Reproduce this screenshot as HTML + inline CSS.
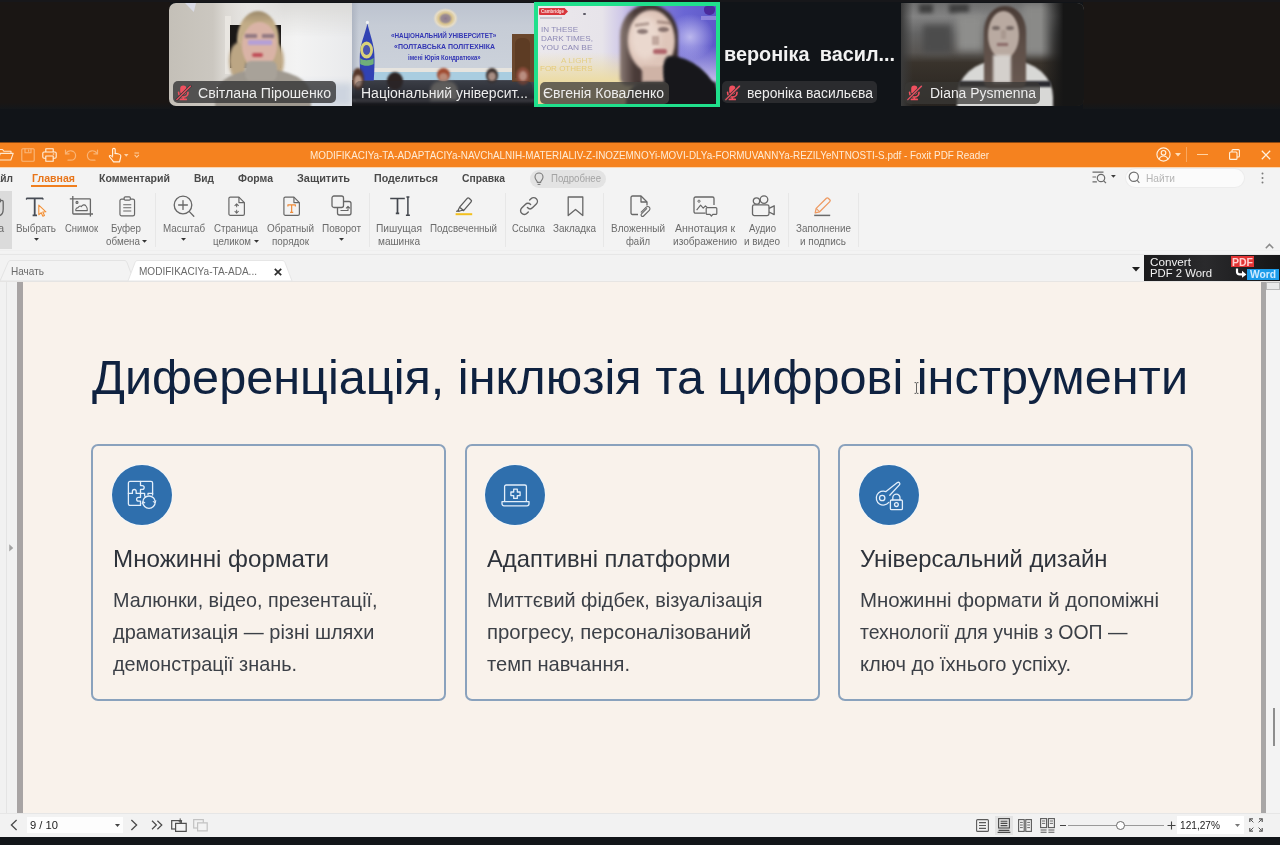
<!DOCTYPE html>
<html lang="uk"><head>
<meta charset="utf-8">
<title>Foxit PDF Reader</title>
<style>
*{box-sizing:border-box;margin:0;padding:0}
html,body{width:1280px;height:845px;overflow:hidden;background:#121519;font-family:"Liberation Sans","DejaVu Sans",sans-serif}
.abs,.t{position:absolute}
.t{white-space:nowrap;line-height:1;display:inline-block;transform-origin:0 50%}
#stage{position:relative;width:1280px;height:845px;overflow:hidden;background:#121519}
/* ---------- video strip ---------- */
#strip{left:0;top:0;width:1280px;height:142px;background:#111418}
.edge{top:0;height:109px;background:linear-gradient(180deg,#1a1614 0,#1a1614 94%,#14171a 100%)}
.tile{top:3px;height:103px;overflow:hidden;background:#222}
.pill{height:22px;top:81px;border-radius:5px;background:rgba(52,52,54,.80)}
.pt{color:#ededed;font-size:14px;top:85.900px}
.mic{position:absolute;width:17px;height:17px;top:83.600px}
.blob{position:absolute;border-radius:50%}
/* ---------- foxit ---------- */
#title{left:0;top:142px;width:1280px;height:25px;background:#f5821f}
#menu{left:0;top:167px;width:1280px;height:86px;background:#f3f3f3}
#tabs{left:0;top:253px;width:1280px;height:29px;background:#f2f2f2}
#doc{left:0;top:282px;width:1280px;height:531px;background:#f9f2eb}
#status{left:0;top:813px;width:1280px;height:24px;background:#f2f2f2}
#bottom{left:0;top:837px;width:1280px;height:8px;background:#121519}
.mt{font-size:11px;font-weight:bold;color:#4a4a4a;top:173px}
.rl{font-size:11px;color:#6b6b6b}
.sep{position:absolute;top:193px;width:1px;height:54px;background:#e7e7e7}
.ico{position:absolute;overflow:visible}
/* ---------- pdf page ---------- */
.h1{font-size:47.500px;color:#0f2240;top:353.800px;left:92px}
.card{position:absolute;top:444px;width:355px;height:257px;border:2px solid #8aa2bd;border-radius:7px;background:#f9f2eb}
.circ{position:absolute;top:465px;width:60px;height:60px;border-radius:50%;background:#2f6fad;box-shadow:0 0 0 1px rgba(240,246,252,.7)}
.ct{font-size:24px;color:#2e333b;top:547.200px}
.cb{font-size:20.800px;color:#3c4047}
</style>
</head>
<body>
<div id="stage">

<div id="strip" class="abs">
 <div class="abs edge" style="left:0;width:170px"></div>
 <div class="abs edge" style="left:1083px;width:197px"></div>
 <div class="abs" style="left:0;top:0;width:1280px;height:2px;background:#17171a"></div>

 <!-- tile 1 -->
 <div class="abs tile" style="left:169px;width:183px;border-radius:7px 0 0 7px;background:linear-gradient(90deg,#c4c0b8 0,#cbc7c0 24%,#dcd9d4 31%,#e9e8e6 44%,#f3f3f3 70%,#e9eaec 100%)">
  <div class="abs" style="left:70px;top:0;width:113px;height:34px;background:linear-gradient(180deg,rgba(214,213,210,.8),rgba(236,236,236,0));-webkit-mask-image:linear-gradient(90deg,transparent,#000 40%);mask-image:linear-gradient(90deg,transparent,#000 40%)"></div>
  <div class="abs" style="left:118px;top:80px;width:65px;height:23px;background:#cdd4df;filter:blur(3px)"></div>
  <div class="abs" style="left:16px;top:0;width:11px;height:9px;background:#d9dbe6;clip-path:polygon(0 0,100% 0,80% 100%)"></div>
  <div class="abs" style="left:56px;top:13px;width:6px;height:58px;background:#e9e6e1"></div>
  <div class="abs" style="left:61px;top:22px;width:51px;height:43px;background:#1a1817"></div>
  <div class="blob" style="left:68px;top:8px;width:42px;height:58px;background:linear-gradient(180deg,#9c8a6c 0,#c3ad88 22%,#c9b492 100%);filter:blur(1.2px)"></div>
  <div class="blob" style="left:60px;top:40px;width:18px;height:36px;background:#bca684;filter:blur(1.6px)"></div>
  <div class="blob" style="left:98px;top:40px;width:17px;height:36px;background:#bfa987;filter:blur(1.6px)"></div>
  <div class="blob" style="left:73px;top:19px;width:35px;height:47px;background:#d9b3a6;filter:blur(1.2px)"></div>
  <div class="abs" style="left:76px;top:31px;width:12px;height:4px;background:#5a4a66;opacity:.55;filter:blur(1px)"></div>
  <div class="abs" style="left:93px;top:31px;width:12px;height:4px;background:#5a4a66;opacity:.55;filter:blur(1px)"></div>
  <div class="abs" style="left:79px;top:37px;width:24px;height:5px;background:#a99ae6;opacity:.75;filter:blur(1px)"></div>
  <div class="abs" style="left:83px;top:49.500px;width:11px;height:4px;background:#c04e58;border-radius:2px;filter:blur(.8px)"></div>
  <div class="abs" style="left:46px;top:66px;width:96px;height:50px;background:#9f9990;border-radius:48px 48px 0 0/26px 26px 0 0;filter:blur(1.3px)"></div>
  <div class="abs" style="left:76px;top:58px;width:32px;height:20px;background:#a8a299;border-radius:6px;filter:blur(1.1px)"></div>
 </div>
 <div class="abs pill" style="left:173px;width:163px"></div>
 <svg class="mic" style="left:175px" viewBox="0 0 17 17"><rect x="5.200" y="1.600" width="6.200" height="9" rx="3.100" fill="#f0505f"></rect>
  <path d="M3.600 8.400a4.700 4.700 0 0 0 9.400 0M8.300 13v2.200M5.400 15.400h5.800" fill="none" stroke="#f0505f" stroke-width="1.700" stroke-linecap="round"></path>
  <path d="M1.800 15.600L15.400 2.200" stroke="#3a3a3c" stroke-width="2.800" stroke-linecap="round"></path>
  <path d="M1.800 15.600L15.400 2.200" stroke="#f0505f" stroke-width="1.300" stroke-linecap="round"></path></svg>
 <span class="t pt" style="left: 198px; display: inline-block; white-space: nowrap; transform-origin: 0px 50%; transform: scaleX(1.01);">Світлана Пірошенко</span>

 <!-- tile 2 -->
 <div class="abs tile" style="left:352px;width:182px;background:linear-gradient(180deg,#bcc3cf 0,#c6ccd6 22%,#cbd1da 60%,#c9cfd8 100%)">
  <div class="abs" style="left:0;top:0;width:7px;height:80px;background:linear-gradient(90deg,#aeb5c2,rgba(190,197,208,0))"></div>
  <div class="abs" style="left:22px;top:65px;width:140px;height:4px;background:#e6e4df"></div>
  <div class="abs" style="left:0;top:69px;width:182px;height:10px;background:#a9cde0"></div>
  <div class="abs" style="left:0;top:77px;width:182px;height:26px;background:linear-gradient(180deg,#474c56 0,#30333b 45%,#1d1e24 80%,#141518 100%)"></div>
  <div class="abs" style="left:159.500px;top:31px;width:22.500px;height:48px;background:#6a472d"></div>
  <div class="abs" style="left:163px;top:35px;width:15px;height:40px;background:#5d3c24;border-radius:6px 6px 0 0"></div>
  <svg class="ico" style="left:6px;top:17px" width="18" height="62" viewBox="0 0 18 62"><path d="M9.400 3.500C7.500 12 3.400 22 2.200 30c-1 8 0 22 0 30.500h13.600c.6-9 1.200-22 .2-30.500C15 22 11.400 12 9.400 3.500z" fill="#3142b4"></path><ellipse cx="8.600" cy="30" rx="6.400" ry="8.600" fill="#d9d27a"></ellipse><ellipse cx="8.600" cy="30" rx="3.600" ry="5" fill="#4a55b0"></ellipse><path d="M2.200 38c3 3 9.600 3 13.400 0v6c-4 2.400-10 2.400-13.400 0z" fill="#6fae7a"></path><circle cx="9.400" cy="2.400" r="1.600" fill="#eef0f2"></circle></svg>
  <div class="blob" style="left:81px;top:4.500px;width:25px;height:21px;background:radial-gradient(closest-side,#8d7a8e 0,#9c8d92 35%,#d9c48e 55%,#e6dcc6 80%,rgba(214,214,214,0) 100%)"></div>
  <span class="t" style="left: 39px; top: 29.4px; font-size: 8px; font-weight: bold; color: rgb(51, 54, 180); display: inline-block; white-space: nowrap; transform-origin: 0px 50%; transform: scaleX(0.791);">«НАЦІОНАЛЬНИЙ УНІВЕРСИТЕТ»</span>
  <span class="t" style="left: 42px; top: 40.3px; font-size: 8px; font-weight: bold; color: rgb(51, 54, 180); display: inline-block; white-space: nowrap; transform-origin: 0px 50%; transform: scaleX(0.8728);">«ПОЛТАВСЬКА ПОЛІТЕХНІКА</span>
  <span class="t" style="left: 55.7px; top: 50.6px; font-size: 7px; font-weight: bold; color: rgb(51, 54, 180); display: inline-block; white-space: nowrap; transform-origin: 0px 50%; transform: scaleX(0.8573);">імені Юрія Кондратюка»</span>
  <div class="blob" style="left:0;top:65px;width:12px;height:22px;background:#553628;filter:blur(1px)"></div>
  <div class="blob" style="left:2px;top:72px;width:8px;height:12px;background:#b89a8a;filter:blur(1px)"></div>
  <div class="blob" style="left:35px;top:69px;width:16px;height:18px;background:#2c2322;filter:blur(1px)"></div>
  <div class="blob" style="left:84.500px;top:64.500px;width:13px;height:13px;background:#a04a30;filter:blur(.9px)"></div>
  <div class="blob" style="left:86.500px;top:70px;width:9px;height:9px;background:#b98a78;filter:blur(.9px)"></div>
  <div class="abs" style="left:78px;top:78px;width:28px;height:20px;background:#7a7873;border-radius:10px 10px 0 0;filter:blur(1.4px)"></div>
  <div class="blob" style="left:134px;top:65px;width:12px;height:15px;background:#3a2f2c;filter:blur(1px)"></div>
  <div class="blob" style="left:136px;top:69px;width:8px;height:9px;background:#a88e84;filter:blur(1px)"></div>
  <div class="blob" style="left:164px;top:63.500px;width:14px;height:18px;background:#8a4c3a;filter:blur(1px)"></div>
  <div class="blob" style="left:167px;top:67.500px;width:8px;height:10px;background:#b98e80;filter:blur(1px)"></div>
  <div class="abs" style="left:0;top:96px;width:182px;height:3px;background:#5c5d62;opacity:.55;filter:blur(1px)"></div>
 </div>
 <div class="abs pill" style="left:355px;width:177px;background:rgba(40,41,46,.35)"></div>
 <span class="t pt" style="left: 360.5px; display: inline-block; white-space: nowrap; transform-origin: 0px 50%; transform: scaleX(0.9993);">Національний університ...</span>

 <!-- tile 3 (active speaker) -->
 <div class="abs" style="left:534px;top:2px;width:185.500px;height:105px;background:#20e08c"></div>
 <div class="abs tile" style="left:537.500px;top:5.500px;width:178.500px;height:98px;background:linear-gradient(90deg,#ebe8ec 0,#e7e4ea 36%,#cfc8e8 47%,#8d84d8 62%,#6a66d4 82%,#5f59c8 100%)">
  <div class="abs" style="left:0;top:46px;width:96px;height:52px;background:linear-gradient(180deg,rgba(236,222,170,0),#ecdca6 55%,#e6d294)"></div>
  <div class="abs" style="left:96px;top:40px;width:83px;height:58px;background:linear-gradient(180deg,rgba(214,208,240,0),#d2ccee 70%,#e2def4)"></div>
  <div class="blob" style="left:128px;top:8px;width:48px;height:46px;background:radial-gradient(closest-side,rgba(196,192,240,.9),rgba(150,144,226,0))"></div>
  <div class="abs" style="left:1px;top:2.500px;width:26px;height:7px;background:#d8363c;border-radius:1px"></div>
  <div class="abs" style="left:24.500px;top:3.500px;width:5px;height:5px;background:#d8363c;transform:rotate(45deg)"></div>
  <span class="t" style="left: 3px; top: 3.5px; font-size: 5px; font-weight: bold; color: rgb(248, 220, 220); display: inline-block; white-space: nowrap; transform-origin: 0px 50%; transform: scaleX(0.8804);">Cambridge</span>
  <div class="abs" style="left:2px;top:11.500px;width:22px;height:1.500px;background:#b9b6c0;opacity:.7"></div>
  <div class="blob" style="left:45.500px;top:7px;width:2.500px;height:2.500px;background:#5d5a66"></div>
  <span class="t" style="left: 3.5px; top: 20.5px; font-size: 8px; color: rgb(142, 138, 182); display: inline-block; white-space: nowrap; transform-origin: 0px 50%; transform: scaleX(1.0068);">IN THESE</span>
  <span class="t" style="left: 3.5px; top: 29.5px; font-size: 8px; color: rgb(142, 138, 182); display: inline-block; white-space: nowrap; transform-origin: 0px 50%; transform: scaleX(1.0199);">DARK TIMES,</span>
  <span class="t" style="left: 3.5px; top: 38.5px; font-size: 8px; color: rgb(142, 138, 182); display: inline-block; white-space: nowrap; transform-origin: 0px 50%; transform: scaleX(1.0437);">YOU CAN BE</span>
  <span class="t" style="left: 23px; top: 51px; font-size: 8px; color: rgb(228, 207, 134); display: inline-block; white-space: nowrap; transform-origin: 0px 50%; transform: scaleX(1.0265);">A LIGHT</span>
  <span class="t" style="left: 2px; top: 59.5px; font-size: 8px; color: rgb(230, 203, 120); display: inline-block; white-space: nowrap; transform-origin: 0px 50%; transform: scaleX(1.0009);">FOR OTHERS</span>
  <div class="abs" style="left:166px;top:0;width:11px;height:9px;background:#4b2a9c;border-radius:3px 3px 5px 5px"></div>
  <div class="abs" style="left:163px;top:10px;width:15px;height:4px;background:#9a8fe0;opacity:.8;filter:blur(.6px)"></div>
  <div class="abs" style="left:82px;top:-2px;width:58px;height:82px;background:linear-gradient(90deg,#8a7a74 0,#4a3b38 25%,#3a2e2c 100%);border-radius:29px 29px 8px 8px/32px 32px 8px 8px;filter:blur(1.6px)"></div>
  <div class="blob" style="left:90px;top:4px;width:47px;height:62px;background:#dfc6ba;filter:blur(1.5px)"></div>
  <div class="blob" style="left:92px;top:10px;width:30px;height:44px;background:#ead8ce;filter:blur(3px)"></div>
  <div class="blob" style="left:99px;top:23px;width:11px;height:5px;background:#4e3a3a;opacity:.6;filter:blur(1.2px)"></div><div class="blob" style="left:120px;top:21px;width:11px;height:5px;background:#4e3a3a;opacity:.6;filter:blur(1.2px)"></div><div class="abs" style="left:97px;top:17px;width:14px;height:2.500px;background:#6a5048;opacity:.45;filter:blur(1px);transform:rotate(-8deg)"></div><div class="abs" style="left:119px;top:15px;width:14px;height:2.500px;background:#6a5048;opacity:.45;filter:blur(1px);transform:rotate(6deg)"></div>
  <div class="abs" style="left:114px;top:30px;width:7px;height:9px;background:#9a7a72;opacity:.5;filter:blur(1.2px)"></div>
  <div class="abs" style="left:115px;top:43.500px;width:14px;height:5px;background:#b0666c;border-radius:3px;filter:blur(1px)"></div>
  <div class="abs" style="left:104px;top:60px;width:26px;height:24px;background:#cfb3a6;filter:blur(1.5px)"></div>
  <div class="abs" style="left:88px;top:76px;width:90px;height:26px;background:#18181c;border-radius:20px 0 0 0;filter:blur(1.5px)"></div>
  <div class="abs" style="left:126px;top:50px;width:52px;height:56px;background:#17171b;border-radius:14px 44px 0 0/40px 46px 0 0;filter:blur(1.3px);transform:skewX(14deg)"></div>
 </div>
 <div class="abs pill" style="left:539.500px;width:129px;top:81.500px;background:rgba(70,68,64,.80)"></div>
 <span class="t pt" style="left: 543px; display: inline-block; white-space: nowrap; transform-origin: 0px 50%; transform: scaleX(0.9986);">Євгенія Коваленко</span>

 <!-- tile 4 (no video) -->
 <span class="t" style="left: 724px; top: 43px; font-size: 21px; font-weight: bold; color: rgb(242, 242, 242); word-spacing: 5px; display: inline-block; white-space: nowrap; transform-origin: 0px 50%; transform: scaleX(0.9434);">вероніка васил...</span>
 <div class="abs pill" style="left:722px;width:155px;background:#2a2b2e"></div>
 <svg class="mic" style="left:724px" viewBox="0 0 17 17"><rect x="5.200" y="1.600" width="6.200" height="9" rx="3.100" fill="#f0505f"></rect>
  <path d="M3.600 8.400a4.700 4.700 0 0 0 9.400 0M8.300 13v2.200M5.400 15.400h5.800" fill="none" stroke="#f0505f" stroke-width="1.700" stroke-linecap="round"></path>
  <path d="M1.800 15.600L15.400 2.200" stroke="#3a3a3c" stroke-width="2.800" stroke-linecap="round"></path>
  <path d="M1.800 15.600L15.400 2.200" stroke="#f0505f" stroke-width="1.300" stroke-linecap="round"></path></svg>
 <span class="t pt" style="left: 747px; display: inline-block; white-space: nowrap; transform-origin: 0px 50%; transform: scaleX(0.9909);">вероніка васильєва</span>

 <!-- tile 5 -->
 <div class="abs tile" style="left:901px;width:183px;border-radius:0 7px 7px 0;background:linear-gradient(180deg,#6e6e6e 0,#838383 13%,#646464 30%,#595653 48%,#39332c 58%,#27231f 100%)">
  <div class="abs" style="left:18px;top:1px;width:14px;height:9px;background:#3f3f3f;filter:blur(2px)"></div>
  <div class="abs" style="left:48px;top:1px;width:20px;height:9px;background:#3f3f3f;filter:blur(2px)"></div>
  <div class="abs" style="left:22px;top:22px;width:28px;height:28px;background:#4c4c4c;filter:blur(3px)"></div>
  <div class="abs" style="left:56px;top:12px;width:26px;height:36px;background:#8e8e8c;filter:blur(3.500px)"></div>
  <div class="abs" style="left:122px;top:2px;width:28px;height:50px;background:#8a8a88;filter:blur(3.500px)"></div>
  <div class="abs" style="left:140px;top:0;width:50px;height:110px;background:linear-gradient(90deg,rgba(20,20,20,0),#161616 45%)"></div>
  <div class="abs" style="left:0;top:0;width:12px;height:110px;background:linear-gradient(90deg,#3a3a3a,rgba(58,58,58,0))"></div>
  <div class="abs" style="left:56px;top:58px;width:96px;height:50px;background:#d8d8d6;border-radius:40px 40px 0 0/36px 36px 0 0;filter:blur(1.2px)"></div>
  <div class="abs" style="left:58px;top:78px;width:92px;height:6px;background:#2a2a30;filter:blur(1px);transform:rotate(0deg)"></div>
  <div class="abs" style="left:82.500px;top:3px;width:42px;height:82px;background:linear-gradient(180deg,#4a3c36 0,#5e4f48 50%,#6a5a52 100%);border-radius:20px 20px 6px 6px/26px 26px 6px 6px;filter:blur(1.3px)"></div>
  <div class="blob" style="left:87px;top:8px;width:31px;height:48px;background:#b9aaa1;filter:blur(1.3px)"></div>
  <div class="abs" style="left:92px;top:52px;width:18px;height:28px;background:#d4d0cc;filter:blur(1.5px)"></div>
  <div class="blob" style="left:91px;top:23px;width:8px;height:4px;background:#4a3e3c;opacity:.6;filter:blur(1px)"></div><div class="blob" style="left:105px;top:23px;width:8px;height:4px;background:#4a3e3c;opacity:.6;filter:blur(1px)"></div><div class="abs" style="left:100px;top:27px;width:5px;height:9px;background:#9a8880;opacity:.5;filter:blur(1.2px)"></div>
  <div class="abs" style="left:96px;top:40px;width:11px;height:3px;background:#8a6a68;filter:blur(.8px)"></div>
 </div>
 <div class="abs pill" style="left:904.500px;width:135px;top:81.500px;background:rgba(58,56,54,.74)"></div>
 <svg class="mic" style="left:906px" viewBox="0 0 17 17"><rect x="5.200" y="1.600" width="6.200" height="9" rx="3.100" fill="#f0505f"></rect>
  <path d="M3.600 8.400a4.700 4.700 0 0 0 9.400 0M8.300 13v2.200M5.400 15.400h5.800" fill="none" stroke="#f0505f" stroke-width="1.700" stroke-linecap="round"></path>
  <path d="M1.800 15.600L15.400 2.200" stroke="#3a3a3c" stroke-width="2.800" stroke-linecap="round"></path>
  <path d="M1.800 15.600L15.400 2.200" stroke="#f0505f" stroke-width="1.300" stroke-linecap="round"></path></svg>
 <span class="t pt" style="left: 930px; display: inline-block; white-space: nowrap; transform-origin: 0px 50%; transform: scaleX(0.9941);">Diana Pysmenna</span>
</div>
<!--/STRIP-->
<div id="title" class="abs">
 <div class="abs" style="left:0;top:0;width:1280px;height:1px;background:#8a4812"></div>
 <!-- quick access icons -->
 <svg class="ico" style="left:-3px;top:6px" width="17" height="14" viewBox="0 0 17 14" fill="none" stroke="#ffe9cf" stroke-width="1.1" stroke-linejoin="round"><path d="M1 12V1.5h4.5l1.5 1.8h7V5"></path><path d="M1 12l2.4-6.6h12.8L13.8 12z"></path></svg>
 <svg class="ico" style="left:21px;top:6px" width="14" height="14" viewBox="0 0 14 14" fill="none" stroke="#f9b97d" stroke-width="1.1"><rect x=".8" y=".8" width="12.4" height="12.4" rx="1"></rect><path d="M4 .8v4h6v-4M7.6 1.6v2.2"></path></svg>
 <svg class="ico" style="left:42px;top:6px" width="15" height="14" viewBox="0 0 15 14" fill="none" stroke="#fff1df" stroke-width="1.1" stroke-linejoin="round"><path d="M3.8 4V.8h7.4V4"></path><rect x=".8" y="4" width="13.4" height="6.2" rx="1.2"></rect><path d="M3.8 8h7.4v5.2H3.8z" fill="#f5821f"></path><path d="M10.8 6h1.4"></path></svg>
 <svg class="ico" style="left:64px;top:7px" width="13" height="12" viewBox="0 0 13 12" fill="none" stroke="#f9b476" stroke-width="1.2" stroke-linecap="round"><path d="M1.5 1.2v3.6h3.6"></path><path d="M1.8 4.6C3 2.6 5 1.6 7.2 1.8c2.8.3 4.6 2.6 4.4 5.2-.2 2.400-2.200 4.200-4.800 4.200H4"></path></svg>
 <svg class="ico" style="left:86px;top:7px" width="13" height="12" viewBox="0 0 13 12" fill="none" stroke="#f9b476" stroke-width="1.2" stroke-linecap="round"><path d="M11.500 1.200v3.600H7.900"></path><path d="M11.200 4.600C10 2.600 8 1.600 5.800 1.800 3 2.100 1.200 4.400 1.400 7c.2 2.400 2.200 4.200 4.800 4.200H9"></path></svg>
 <svg class="ico" style="left:108px;top:5px" width="14" height="16" viewBox="0 0 14 16" fill="none" stroke="#fff1df" stroke-width="1.15" stroke-linejoin="round" stroke-linecap="round"><path d="M4.600 8.500V2.600a1.300 1.300 0 0 1 2.600 0v4"></path><path d="M7.200 6.400c1.600 0 5.600.6 5.600 2.400 0 2.400-.8 3.200-1.200 6H5.400C4.600 12.600 1.800 10.800 1.400 9.400c-.3-1.100 1.400-1.600 3.200.5"></path></svg>
 <svg class="ico" style="left:123.500px;top:11.500px" width="4.500" height="3" viewBox="0 0 6 4"><path d="M0 0h6L3 3.600z" fill="#fdd1a6"></path></svg>
 <svg class="ico" style="left:134px;top:10px" width="5.500" height="6.500" viewBox="0 0 7 8" fill="none" stroke="#fdd1a6" stroke-width="1.300"><path d="M.6 1h5.800M.8 3.600L3.500 6.600 6.200 3.600"></path></svg>
 <span class="t" style="left: 310px; top: 7.8px; font-size: 11px; color: rgb(255, 236, 214); display: inline-block; white-space: nowrap; transform-origin: 0px 50%; transform: scaleX(0.8981);">MODIFIKACIYa-TA-ADAPTACIYa-NAVChALNIH-MATERIALIV-Z-INOZEMNOYi-MOVI-DLYa-FORMUVANNYa-REZILYeNTNOSTI-S.pdf - Foxit PDF Reader</span>
 <!-- window controls -->
 <svg class="ico" style="left:1156px;top:5px" width="15" height="15" viewBox="0 0 15 15" fill="none" stroke="#fff1df" stroke-width="1.150"><circle cx="7.500" cy="7.500" r="6.600"></circle><circle cx="7.500" cy="5.800" r="2.300"></circle><path d="M3.200 12.300c.6-2.200 2.200-3.300 4.300-3.300s3.700 1.100 4.300 3.300"></path></svg>
 <svg class="ico" style="left:1175px;top:11px" width="6" height="4" viewBox="0 0 6 4"><path d="M0 0h6L3 3.600z" fill="#ffdcb6"></path></svg>
 <div class="abs" style="left:1186px;top:5px;width:1px;height:15px;background:#f9a860"></div>
 <div class="abs" style="left:1197px;top:12px;width:11px;height:1px;background:#ffd3a4"></div>
 <svg class="ico" style="left:1229px;top:7px" width="11" height="11" viewBox="0 0 11 11" fill="none" stroke="#fff1df" stroke-width="1.1"><rect x=".600" y="3" width="7.400" height="7.400" rx="1"></rect><path d="M3 3V1.600a1 1 0 0 1 1-1h5.400a1 1 0 0 1 1 1V7a1 1 0 0 1-1 1H8"></path></svg>
 <svg class="ico" style="left:1261px;top:8px" width="10" height="10" viewBox="0 0 10 10" fill="none" stroke="#fff1df" stroke-width="1.250"><path d="M.8.800l8.400 8.400M9.200.800L.8 9.200"></path></svg>
</div>

<div id="menu" class="abs">
 <div class="abs" style="left:0;top:0;width:1280px;height:1px;background:#fbd5b0"></div>
 <div class="abs" style="left:0;top:83px;width:1280px;height:1px;background:#efefef"></div>
</div>
<!-- menu row -->
<span class="t mt" style="left: -14px; display: inline-block; white-space: nowrap; transform-origin: 0px 50%; transform: scaleX(0.9226);">Файл</span>
<span class="t mt" style="left: 32px; color: rgb(232, 117, 26); display: inline-block; white-space: nowrap; transform-origin: 0px 50%; transform: scaleX(0.9609);">Главная</span>
<div class="abs" style="left:31px;top:185px;width:46px;height:2px;background:#f07f1f"></div>
<span class="t mt" style="left: 99px; display: inline-block; white-space: nowrap; transform-origin: 0px 50%; transform: scaleX(0.9584);">Комментарий</span>
<span class="t mt" style="left: 194px; display: inline-block; white-space: nowrap; transform-origin: 0px 50%; transform: scaleX(0.9215);">Вид</span>
<span class="t mt" style="left: 238px; display: inline-block; white-space: nowrap; transform-origin: 0px 50%; transform: scaleX(0.9512);">Форма</span>
<span class="t mt" style="left: 297px; display: inline-block; white-space: nowrap; transform-origin: 0px 50%; transform: scaleX(0.9933);">Защитить</span>
<span class="t mt" style="left: 374px; display: inline-block; white-space: nowrap; transform-origin: 0px 50%; transform: scaleX(0.9692);">Поделиться</span>
<span class="t mt" style="left: 462px; display: inline-block; white-space: nowrap; transform-origin: 0px 50%; transform: scaleX(0.9386);">Справка</span>
<div class="abs" style="left:530px;top:170px;width:76px;height:18px;border-radius:9px;background:#e3e3e3"></div>
<svg class="ico" style="left:534px;top:172px" width="10" height="14" viewBox="0 0 10 14" fill="none" stroke="#7a7a7a" stroke-width="1.100"><path d="M3.400 10.400C3.400 8.600 1 7.800 1 5a4 4 0 0 1 8 0c0 2.800-2.400 3.600-2.400 5.400z"></path><path d="M3.600 12.400h2.800"></path></svg>
<span class="t" style="left: 551px; top: 173px; font-size: 11px; color: rgb(163, 163, 163); display: inline-block; white-space: nowrap; transform-origin: 0px 50%; transform: scaleX(0.8765);">Подробнее</span>
<!-- right tools in menu row -->
<svg class="ico" style="left:1092px;top:171px" width="15" height="13" viewBox="0 0 15 13" fill="none" stroke="#6a6a6a" stroke-width="1.200"><path d="M.5 1.200h11M.5 6h3.600M.5 10.800h4.400"></path><circle cx="9" cy="7" r="3.700"></circle><path d="M11.700 9.800l2.300 2.400"></path></svg>
<svg class="ico" style="left:1110.500px;top:175px" width="4.800" height="3.200" viewBox="0 0 6 4"><path d="M0 0h6L3 3.600z" fill="#3c3c3c"></path></svg>
<div class="abs" style="left:1126px;top:169px;width:118px;height:18px;border-radius:9px;background:#fbfbfb;box-shadow:0 0 0 1px #ececec"></div>
<svg class="ico" style="left:1128px;top:171px" width="13" height="13" viewBox="0 0 13 13" fill="none" stroke="#6f6f6f" stroke-width="1.200"><circle cx="5.800" cy="5.800" r="4.600"></circle><path d="M9.200 9.400l2.200 2.400"></path></svg>
<span class="t" style="left: 1146px; top: 173px; font-size: 11px; color: rgb(181, 181, 181); display: inline-block; white-space: nowrap; transform-origin: 0px 50%; transform: scaleX(0.9238);">Найти</span>
<svg class="ico" style="left:1261px;top:171.500px" width="3" height="13" viewBox="0 0 3 13" fill="#7a7a7a"><circle cx="1.500" cy="1.500" r="1"></circle><circle cx="1.500" cy="6" r="1"></circle><circle cx="1.500" cy="10.500" r="1"></circle></svg>
<!-- hand tool (active, cut by left edge) -->
<div class="abs" style="left:0;top:191px;width:12px;height:58px;background:#dbdbdb"></div>
<svg class="ico" style="left:-12px;top:196px" width="18" height="21" viewBox="0 0 18 21" fill="none" stroke="#676767" stroke-width="1.300" stroke-linejoin="round"><path d="M4 11V4.500a1.400 1.400 0 0 1 2.800 0V3a1.400 1.400 0 0 1 2.800 0v1.200a1.400 1.400 0 0 1 2.800 0v1.600a1.400 1.400 0 0 1 2.800 0V13c0 4-2 7-6 7s-5-2-7.500-7"></path></svg>
<span class="t rl" style="left: -20px; top: 223px; display: inline-block; white-space: nowrap; transform-origin: 0px 50%; transform: scaleX(0.9993);">Рука</span>
<!-- Выбрать -->
<svg class="ico" style="left:25px;top:196px" width="24" height="22" viewBox="0 0 24 22" fill="none"><path d="M1.400 2.400h16.600M9.700 2.400v16.800M7.600 19.400h4.400" stroke="#474c55" stroke-width="1.800"></path><path d="M1.400 2v1.800M18 2v1.800" stroke="#474c55" stroke-width="1"></path><path d="M13.800 9.200v9.600l2.400-2.100 1.700 3.600 1.600-.8-1.700-3.500 3.100-.200z" fill="#fff3e6" stroke="#f0913a" stroke-width="1.100" stroke-linejoin="round"></path></svg>
<span class="t rl" style="left: 16px; top: 223px; display: inline-block; white-space: nowrap; transform-origin: 0px 50%; transform: scaleX(0.9027);">Выбрать</span>
<svg class="ico" style="left:33.700px;top:237.700px" width="5" height="3.300" viewBox="0 0 6 4"><path d="M0 0h6L3 3.400z" fill="#333"></path></svg>
<!-- Снимок -->
<svg class="ico" style="left:69px;top:195px" width="26" height="23" viewBox="0 0 26 23" fill="none" stroke="#676767" stroke-width="1.300"><path d="M3.800 1v3M.8 3.800h3M21.400 21.600v-2.800M24 19h-2.600"></path><rect x="3.800" y="3.800" width="17.600" height="15.200" rx=".8"></rect><path d="M6.800 15.600c-.3-1.600.8-3 2.300-3 .4-1.500 2.200-2 3.300-1 .9-2 3.400-2.400 4.600-.6 1.100 1.400 1.500 3 1.300 4.600z" stroke-width="1.100" stroke-linejoin="round"></path><circle cx="8" cy="7.400" r="1" stroke-width="1.100"></circle></svg>
<span class="t rl" style="left: 65px; top: 223px; display: inline-block; white-space: nowrap; transform-origin: 0px 50%; transform: scaleX(0.8537);">Снимок</span>
<!-- Буфер обмена -->
<svg class="ico" style="left:118.500px;top:195.500px" width="16.500" height="21" viewBox="0 0 18 23" fill="none" stroke="#676767" stroke-width="1.300"><rect x="1" y="3.400" width="16" height="18.400" rx="1.800"></rect><path d="M5.600 3.400V2.200c0-.7.500-1.200 1.200-1.200h4.400c.7 0 1.200.5 1.200 1.200v1.200c0 .7-.5 1.200-1.200 1.200H6.800c-.7 0-1.200-.5-1.200-1.200z" fill="#f3f3f3"></path><path d="M4.600 9.500h8.800M4.600 13h8.800M4.600 16.500h8.800" stroke-width="1.100"></path></svg>
<span class="t rl" style="left: 111px; top: 223px; display: inline-block; white-space: nowrap; transform-origin: 0px 50%; transform: scaleX(0.8918);">Буфер</span>
<span class="t rl" style="left: 106px; top: 236px; display: inline-block; white-space: nowrap; transform-origin: 0px 50%; transform: scaleX(0.8933);">обмена</span>
<svg class="ico" style="left:142px;top:240.200px" width="5" height="3.300" viewBox="0 0 6 4"><path d="M0 0h6L3 3.400z" fill="#333"></path></svg>
<div class="sep" style="left:155px"></div>
<!-- Масштаб -->
<svg class="ico" style="left:173px;top:195px" width="22" height="23" viewBox="0 0 22 23" fill="none" stroke="#676767" stroke-width="1.300" stroke-linecap="round"><circle cx="10" cy="10" r="8.800"></circle><path d="M10 5.600v8.800M5.600 10h8.800M16.400 16.600l4.400 4.600"></path></svg>
<span class="t rl" style="left: 163px; top: 223px; display: inline-block; white-space: nowrap; transform-origin: 0px 50%; transform: scaleX(0.8924);">Масштаб</span>
<svg class="ico" style="left:181.200px;top:237.700px" width="5" height="3.300" viewBox="0 0 6 4"><path d="M0 0h6L3 3.400z" fill="#333"></path></svg>
<!-- Страница целиком -->
<svg class="ico" style="left:227.800px;top:195.800px" width="17.300" height="20.400" viewBox="0 0 19 22" fill="none" stroke="#676767" stroke-width="1.300" stroke-linejoin="round"><path d="M2.500 1h9.500l6 6v12.500c0 .8-.7 1.500-1.500 1.500h-14C1.700 21 1 20.300 1 19.500v-17C1 1.700 1.700 1 2.500 1z"></path><path d="M12 1v6h6"></path><path d="M9.500 8.600v3.600M9.500 14.800v3.600M7.300 10.700l2.200-2.300 2.200 2.300M7.300 16.300l2.200 2.300 2.200-2.300" stroke-width="1.100"></path></svg>
<span class="t rl" style="left: 214px; top: 223px; display: inline-block; white-space: nowrap; transform-origin: 0px 50%; transform: scaleX(0.8825);">Страница</span>
<span class="t rl" style="left: 213px; top: 236px; display: inline-block; white-space: nowrap; transform-origin: 0px 50%; transform: scaleX(0.8815);">целиком</span>
<svg class="ico" style="left:253.700px;top:240.200px" width="5" height="3.300" viewBox="0 0 6 4"><path d="M0 0h6L3 3.400z" fill="#333"></path></svg>
<!-- Обратный порядок -->
<svg class="ico" style="left:282.800px;top:195.800px" width="17.300" height="20.400" viewBox="0 0 19 22" fill="none" stroke="#676767" stroke-width="1.300" stroke-linejoin="round"><path d="M2.500 1h9.500l6 6v12.500c0 .8-.7 1.500-1.500 1.500h-14C1.700 21 1 20.300 1 19.500v-17C1 1.700 1.700 1 2.500 1z"></path><path d="M12 1v6h6"></path><path d="M5.400 11.400V9.600h8.200v1.800M9.500 9.600v8M7.800 17.700h3.400" stroke="#ee8b3a" stroke-width="1.300"></path></svg>
<span class="t rl" style="left: 267px; top: 223px; display: inline-block; white-space: nowrap; transform-origin: 0px 50%; transform: scaleX(0.9036);">Обратный</span>
<span class="t rl" style="left: 272px; top: 236px; display: inline-block; white-space: nowrap; transform-origin: 0px 50%; transform: scaleX(0.8943);">порядок</span>
<!-- Поворот -->
<svg class="ico" style="left:331px;top:195px" width="22" height="21" viewBox="0 0 22 21" fill="none" stroke="#676767" stroke-width="1.300" stroke-linejoin="round"><rect x="1" y="1" width="11.500" height="11.500" rx="2"></rect><path d="M12.500 6.500h5.500a2 2 0 0 1 2 2v9.500a2 2 0 0 1-2 2H8.500a2 2 0 0 1-2-2v-5.500"></path><path d="M9.500 15.500h7.500v-4M15 13.300l2 -2 2 2" stroke-width="1.100"></path></svg>
<span class="t rl" style="left: 322px; top: 223px; display: inline-block; white-space: nowrap; transform-origin: 0px 50%; transform: scaleX(0.909);">Поворот</span>
<svg class="ico" style="left:339.200px;top:237.700px" width="5" height="3.300" viewBox="0 0 6 4"><path d="M0 0h6L3 3.400z" fill="#333"></path></svg>
<div class="sep" style="left:369px"></div>
<!-- Пишущая машинка -->
<svg class="ico" style="left:389px;top:196px" width="22" height="21" viewBox="0 0 22 21" fill="none" stroke="#43474e"><path d="M1.200 2.500h14.600M8.500 2.500v15M6.800 17.400h3.400" stroke-width="1.700"></path><path d="M17.400 .900h3M18.900 .900v18.300M16.900 19.300h4" stroke-width="1.500"></path></svg>
<span class="t rl" style="left: 376px; top: 223px; display: inline-block; white-space: nowrap; transform-origin: 0px 50%; transform: scaleX(0.9293);">Пишущая</span>
<span class="t rl" style="left: 378px; top: 236px; display: inline-block; white-space: nowrap; transform-origin: 0px 50%; transform: scaleX(0.9149);">машинка</span>
<!-- Подсвеченный -->
<svg class="ico" style="left:454px;top:196px" width="20" height="20" viewBox="0 0 20 20" fill="none"><path d="M5.600 11.200L13.200 2.400c.5-.6 1.300-.6 1.900-.1l1.900 1.700c.6.500.6 1.300.1 1.900L9.600 14.600z" stroke="#5b5b5b" stroke-width="1.300" stroke-linejoin="round"></path><path d="M5.600 11.200l-1.500 3.100 .9.900 3.300-1 1.300.400" stroke="#5b5b5b" stroke-width="1.200" stroke-linejoin="round"></path><path d="M4.400 14.600l-2.200.700h3z" fill="#5b5b5b" stroke="#5b5b5b" stroke-width=".800"></path><path d="M1.600 18.200h16.600" stroke="#f2c01f" stroke-width="2"></path></svg>
<span class="t rl" style="left: 430px; top: 223px; display: inline-block; white-space: nowrap; transform-origin: 0px 50%; transform: scaleX(0.8906);">Подсвеченный</span>
<div class="sep" style="left:505px"></div>
<!-- Ссылка -->
<svg class="ico" style="left:519px;top:196px" width="20" height="20" viewBox="0 0 20 20" fill="none" stroke="#676767" stroke-width="1.400" stroke-linecap="round"><path d="M8.400 11.600c1.500 1.500 3.800 1.500 5.300 0l3.600-3.600c1.500-1.500 1.500-3.800 0-5.300s-3.800-1.500-5.300 0l-1.300 1.300"></path><path d="M11.600 8.400c-1.500-1.500-3.800-1.500-5.300 0l-3.600 3.600c-1.500 1.500-1.500 3.800 0 5.300s3.800 1.500 5.300 0l1.300-1.300"></path></svg>
<span class="t rl" style="left: 512px; top: 223px; display: inline-block; white-space: nowrap; transform-origin: 0px 50%; transform: scaleX(0.8472);">Ссылка</span>
<!-- Закладка -->
<svg class="ico" style="left:567px;top:196px" width="17" height="21" viewBox="0 0 17 21" fill="none" stroke="#676767" stroke-width="1.300" stroke-linejoin="round"><path d="M1.200 1h14.600v18.600L8.500 13.400 1.200 19.600z"></path></svg>
<span class="t rl" style="left: 553px; top: 223px; display: inline-block; white-space: nowrap; transform-origin: 0px 50%; transform: scaleX(0.8991);">Закладка</span>
<div class="sep" style="left:603px"></div>
<!-- Вложенный файл -->
<svg class="ico" style="left:629.500px;top:195px" width="22" height="23" viewBox="0 0 22 23" fill="none" stroke="#676767" stroke-width="1.300" stroke-linejoin="round"><path d="M8 19.500H2.500C1.700 19.500 1 18.800 1 18V2.500C1 1.700 1.700 1 2.500 1H11l6 6v3.500"></path><path d="M11 1v6h6"></path><path d="M11.200 17.200l5-5c.9-.9 2.300-.9 3.100 0s.9 2.300 0 3.100l-5.700 5.700c-.6.600-1.500.6-2.100 0s-.6-1.500 0-2.100l5.200-5.200" stroke-width="1.100" stroke-linecap="round"></path></svg>
<span class="t rl" style="left: 611px; top: 223px; display: inline-block; white-space: nowrap; transform-origin: 0px 50%; transform: scaleX(0.9066);">Вложенный</span>
<span class="t rl" style="left: 626px; top: 236px; display: inline-block; white-space: nowrap; transform-origin: 0px 50%; transform: scaleX(0.8654);">файл</span>
<!-- Аннотация к изображению -->
<svg class="ico" style="left:693px;top:196px" width="25" height="21" viewBox="0 0 25 21" fill="none" stroke="#676767" stroke-width="1.300" stroke-linejoin="round"><path d="M12.500 17.200H2.500c-.8 0-1.500-.7-1.500-1.500V2.500C1 1.700 1.700 1 2.500 1h17c.8 0 1.500.7 1.500 1.500V9"></path><path d="M3.600 14.200l4-5 2.600 3 2.200-2.400 1.800 1.600" stroke-width="1.100"></path><circle cx="6" cy="5.200" r="1.100" stroke-width="1"></circle><path d="M14.200 11.600h8.600c.6 0 1 .4 1 1v4.800c0 .6-.4 1-1 1h-3l-1.400 1.600-1.400-1.600h-2.800c-.6 0-1-.4-1-1v-4.800c0-.6.4-1 1-1z" fill="#f3f3f3" stroke-width="1.200"></path></svg>
<span class="t rl" style="left: 675px; top: 223px; display: inline-block; white-space: nowrap; transform-origin: 0px 50%; transform: scaleX(0.9574);">Аннотация к</span>
<span class="t rl" style="left: 673px; top: 236px; display: inline-block; white-space: nowrap; transform-origin: 0px 50%; transform: scaleX(0.9186);">изображению</span>
<!-- Аудио и видео -->
<svg class="ico" style="left:751px;top:195px" width="25" height="22" viewBox="0 0 25 22" fill="none" stroke="#676767" stroke-width="1.300" stroke-linejoin="round"><circle cx="5.500" cy="6" r="3.200"></circle><circle cx="13" cy="4.600" r="3.800"></circle><rect x="1.500" y="9.800" width="16.500" height="10.800" rx="1.800"></rect><path d="M18 13.400l5.200-2.600v8.800L18 17"></path></svg>
<span class="t rl" style="left: 749px; top: 223px; display: inline-block; white-space: nowrap; transform-origin: 0px 50%; transform: scaleX(0.8701);">Аудио</span>
<span class="t rl" style="left: 744px; top: 236px; display: inline-block; white-space: nowrap; transform-origin: 0px 50%; transform: scaleX(0.9035);">и видео</span>
<div class="sep" style="left:788px"></div>
<!-- Заполнение и подпись -->
<svg class="ico" style="left:812px;top:196px" width="21" height="21" viewBox="0 0 21 21" fill="none"><path d="M4.200 12.400L14.400 2.200c.5-.5 1.300-.5 1.800 0l1.600 1.600c.5.5.5 1.300 0 1.800L7.600 15.800l-4.400 1z" stroke="#ee9a62" stroke-width="1.300" stroke-linejoin="round"></path><path d="M4.200 12.400l3.400 3.400" stroke="#ee9a62" stroke-width="1.100"></path><path d="M2.200 19.400h16" stroke="#6a6a6a" stroke-width="1.500"></path></svg>
<span class="t rl" style="left: 796px; top: 223px; display: inline-block; white-space: nowrap; transform-origin: 0px 50%; transform: scaleX(0.8936);">Заполнение</span>
<span class="t rl" style="left: 800px; top: 236px; display: inline-block; white-space: nowrap; transform-origin: 0px 50%; transform: scaleX(0.9056);">и подпись</span>
<div class="sep" style="left:858px"></div>
<!-- collapse ribbon -->
<svg class="ico" style="left:1265px;top:243px" width="9" height="6" viewBox="0 0 9 6" fill="none" stroke="#8a8a8a" stroke-width="1.500"><path d="M.8 5.200L4.500 1.400 8.200 5.200"></path></svg>
<!--/RIBBON-->
<!--/FOXIT-->
<div id="tabs" class="abs">
 <div class="abs" style="left:0;top:1px;width:1280px;height:1px;background:#e6e6e6"></div>
 <div class="abs" style="left:0;top:28px;width:1280px;height:1px;background:#e7e5e3"></div>
 <!-- tab 1 -->
 <svg class="ico" style="left:0;top:6px" width="134" height="22" viewBox="0 0 134 22"><path d="M0 22L8 3.500C8.600 2 9.600 1.500 11 1.500h113c1.400 0 2.400.5 3 2L134 22z" fill="#f3f3f3" stroke="#e3e3e3" stroke-width="1"></path></svg>
 <!-- tab 2 (active) -->
 <svg class="ico" style="left:128px;top:6px" width="164" height="22" viewBox="0 0 164 22"><path d="M0 22L7 3.500C7.600 2 8.600 1.500 10 1.500h144c1.400 0 2.400.5 3 2L164 22z" fill="#ffffff" stroke="#e6e6e6" stroke-width="1"></path></svg>
</div>
<span class="t" style="left: 11px; top: 266px; font-size: 10.5px; color: rgb(106, 106, 106); display: inline-block; white-space: nowrap; transform-origin: 0px 50%; transform: scaleX(0.9548);">Начать</span>
<span class="t" style="left: 139px; top: 266px; font-size: 10.5px; color: rgb(106, 106, 106); display: inline-block; white-space: nowrap; transform-origin: 0px 50%; transform: scaleX(0.957);">MODIFIKACIYa-TA-ADA...</span>
<svg class="ico" style="left:274px;top:268px" width="8" height="8" viewBox="0 0 8 8" fill="none" stroke="#2e2e2e" stroke-width="1.700"><path d="M.8.800l6.400 6.400M7.200.800L.8 7.200"></path></svg>
<svg class="ico" style="left:1132px;top:267px" width="8" height="5" viewBox="0 0 8 5"><path d="M0 0h8L4 4.600z" fill="#1e1e1e"></path></svg>
<!-- ad banner -->
<div class="abs" style="left:1144px;top:255px;width:136px;height:26px;background:linear-gradient(90deg,#1b1b1d,#2a2a2c 45%,#151517)"></div>
<span class="t" style="left: 1150px; top: 257px; font-size: 11.5px; color: rgb(242, 242, 242); display: inline-block; white-space: nowrap; transform-origin: 0px 50%; transform: scaleX(1.0178);">Convert</span>
<span class="t" style="left: 1150px; top: 268px; font-size: 11.5px; color: rgb(242, 242, 242); display: inline-block; white-space: nowrap; transform-origin: 0px 50%; transform: scaleX(0.9832);">PDF 2 Word</span>
<div class="abs" style="left:1231px;top:256px;width:23px;height:11px;background:#e23434"></div>
<span class="t" style="left: 1232px; top: 256.5px; font-size: 11px; font-weight: bold; color: rgb(255, 208, 208); display: inline-block; white-space: nowrap; transform-origin: 0px 50%; transform: scaleX(0.9545);">PDF</span>
<svg class="ico" style="left:1235px;top:268px" width="12" height="10" viewBox="0 0 12 10" fill="none"><path d="M2 .600v3.200c0 1.600 1.200 2.600 2.800 2.600h2.600" stroke="#fff" stroke-width="2.200"></path><path d="M7 2.800l4.400 3.600L7 9.800z" fill="#fff"></path></svg>
<div class="abs" style="left:1247px;top:268.500px;width:32px;height:11.500px;background:#1c9cea"></div>
<span class="t" style="left: 1250px; top: 268.5px; font-size: 11.5px; font-weight: bold; color: rgb(207, 234, 255); display: inline-block; white-space: nowrap; transform-origin: 0px 50%; transform: scaleX(0.8913);">Word</span>

<div id="doc" class="abs">
 <div class="abs" style="left:0;top:0;width:17px;height:532px;background:#f1f1f1"></div>
 <div class="abs" style="left:6px;top:0;width:1px;height:532px;background:#e4e4e4"></div>
 <div class="abs" style="left:17px;top:0;width:6px;height:532px;background:#a8a4a4"></div>
 <div class="abs" style="left:1261px;top:0;width:5px;height:532px;background:#a8a6a6"></div>
 <div class="abs" style="left:1266px;top:0;width:14px;height:532px;background:#f3f3f3"></div>
 <div class="abs" style="left:1266px;top:0;width:14px;height:8px;background:#e9e9e9;border:1px solid #b8b8b8"></div>
 <div class="abs" style="left:1273px;top:426px;width:2px;height:38px;background:#8e8e8e"></div>
 <svg class="ico" style="left:9px;top:262px" width="4.500" height="7.800" viewBox="0 0 4 7"><path d="M.2.200v6.600L3.800 3.500z" fill="#a2a2a2"></path></svg>
</div>
<span class="t h1" style="display: inline-block; white-space: nowrap; transform-origin: 0px 50%; transform: scaleX(1.0239);">Диференціація, інклюзія та цифрові інструменти</span>
<svg class="ico" style="left:914px;top:382px" width="5" height="12" viewBox="0 0 5 12" fill="none" stroke="#555" stroke-width=".900"><path d="M.5.600h1.500l.5.600.5-.600h1.500M2.500 1.200v9.600M.5 11.400h1.500l.5-.600.5.600h1.500"></path></svg>

<div class="card" style="left:91px"></div>
<div class="card" style="left:464.500px"></div>
<div class="card" style="left:837.500px"></div>
<div class="circ" style="left:111.500px"></div>
<div class="circ" style="left:485px"></div>
<div class="circ" style="left:858.500px"></div>
<!-- puzzle icon -->
<svg class="ico" style="left:126px;top:479px" width="32" height="32" viewBox="0 0 32 32" fill="none" stroke="#e3eefa" stroke-width="1.300" stroke-linejoin="round" stroke-linecap="round">
 <path d="M14.500 26.400H4c-.9 0-1.600-.7-1.600-1.600V4c0-.9.700-1.600 1.600-1.600h21c.9 0 1.600.7 1.600 1.600v12"></path>
 <path d="M14.500 2.400v4.200h1.700c1.200 0 2 .8 2 1.900s-.8 1.900-2 1.900h-1.700v4.600"></path>
 <path d="M2.400 14.400h4v-1.900c0-1.200.8-2 1.900-2s1.900.8 1.900 2v1.900h4.300"></path>
 <path d="M14.500 14.400v4h-1.900c-1.200 0-2 .8-2 1.900s.8 1.900 2 1.900h1.900v4.200"></path>
 <path d="M14.500 14.400h4.100v1.800c0 .700.300 1.200.8 1.600M22 15.600v-1.200h4.600"></path>
 <circle cx="23" cy="23.200" r="6.200"></circle>
 <path d="M16.200 24.600l.8-1.800 1.700 1M29.800 21.800l-.8 1.800-1.700-1" stroke-width="1.100"></path>
</svg>
<!-- laptop icon -->
<svg class="ico" style="left:500px;top:483px" width="31" height="26" viewBox="0 0 31 26" fill="none" stroke="#e3eefa" stroke-width="1.300" stroke-linejoin="round">
 <path d="M4.600 18.600V3.600c0-.9.700-1.600 1.600-1.600h18.600c.9 0 1.600.7 1.600 1.600v15"></path>
 <path d="M2 18.600h27v2.200c0 1.100-.9 2-2 2H4c-1.100 0-2-.9-2-2z"></path>
 <path d="M13.700 6.200h3.600v2.800h2.800v3.600h-2.800v2.800h-3.600v-2.800h-2.800V9h2.800z"></path>
</svg>
<!-- key + lock icon -->
<svg class="ico" style="left:872.500px;top:481px" width="32" height="31" viewBox="0 0 32 31" fill="none" stroke="#e3eefa" stroke-width="1.300" stroke-linejoin="round" stroke-linecap="round">
 <path d="M15.800 21.400A7 7 0 1 1 13 10.600L24.400 1.600c.7-.5 1.600-.4 2.100.2s.5 1.500-.1 2.100L16.800 14.200"></path>
 <circle cx="9.200" cy="17" r="2.700"></circle>
 <rect x="17.400" y="19" width="12" height="9.600" rx="1.200"></rect>
 <path d="M19.800 19v-2.200a3.600 3.600 0 0 1 7.200 0V19"></path>
 <circle cx="23.400" cy="23.600" r="1.900"></circle>
</svg>
<!--/ICONS-->
<span class="t ct" style="left: 113px; display: inline-block; white-space: nowrap; transform-origin: 0px 50%; transform: scaleX(1.0072);">Множинні формати</span>
<span class="t cb" style="left: 113px; top: 590.4px; display: inline-block; white-space: nowrap; transform-origin: 0px 50%; transform: scaleX(0.9503);">Малюнки, відео, презентації,</span>
<span class="t cb" style="left: 113px; top: 622.1px; display: inline-block; white-space: nowrap; transform-origin: 0px 50%; transform: scaleX(0.9586);">драматизація — різні шляхи</span>
<span class="t cb" style="left: 113px; top: 654.4px; display: inline-block; white-space: nowrap; transform-origin: 0px 50%; transform: scaleX(0.9539);">демонстрації знань.</span>

<span class="t ct" style="left: 486.5px; display: inline-block; white-space: nowrap; transform-origin: 0px 50%; transform: scaleX(0.9902);">Адаптивні платформи</span>
<span class="t cb" style="left: 487px; top: 590.4px; display: inline-block; white-space: nowrap; transform-origin: 0px 50%; transform: scaleX(0.954);">Миттєвий фідбек, візуалізація</span>
<span class="t cb" style="left: 487px; top: 622.1px; display: inline-block; white-space: nowrap; transform-origin: 0px 50%; transform: scaleX(0.9787);">прогресу, персоналізований</span>
<span class="t cb" style="left: 487px; top: 654.4px; display: inline-block; white-space: nowrap; transform-origin: 0px 50%; transform: scaleX(0.9676);">темп навчання.</span>

<span class="t ct" style="left: 860px; display: inline-block; white-space: nowrap; transform-origin: 0px 50%; transform: scaleX(0.9942);">Універсальний дизайн</span>
<span class="t cb" style="left: 860px; top: 590.4px; display: inline-block; white-space: nowrap; transform-origin: 0px 50%; transform: scaleX(0.982);">Множинні формати й допоміжні</span>
<span class="t cb" style="left: 860px; top: 622.1px; display: inline-block; white-space: nowrap; transform-origin: 0px 50%; transform: scaleX(0.9361);">технології для учнів з ООП —</span>
<span class="t cb" style="left: 860px; top: 654.4px; display: inline-block; white-space: nowrap; transform-origin: 0px 50%; transform: scaleX(0.9671);">ключ до їхнього успіху.</span>
<!--/DOC-->
<div id="status" class="abs">
 <div class="abs" style="left:0;top:0;width:1280px;height:1px;background:#e6e6e6"></div>
 <svg class="ico" style="left:10px;top:6px" width="8" height="12" viewBox="0 0 8 12" fill="none" stroke="#4a4a4a" stroke-width="1.300"><path d="M6.600 1L1.400 6l5.200 5"></path></svg>
 <div class="abs" style="left:27px;top:4px;width:96px;height:16px;background:#fdfdfd"></div>
 <svg class="ico" style="left:115px;top:11px" width="5" height="3" viewBox="0 0 5 3"><path d="M0 0h5L2.500 3z" fill="#444"></path></svg>
 <svg class="ico" style="left:130px;top:6px" width="8" height="12" viewBox="0 0 8 12" fill="none" stroke="#4a4a4a" stroke-width="1.300"><path d="M1.400 1l5.200 5-5.200 5"></path></svg>
 <svg class="ico" style="left:151px;top:7px" width="12" height="10" viewBox="0 0 12 10" fill="none" stroke="#4a4a4a" stroke-width="1.200"><path d="M1 .800L5.400 5 1 9.200M6.400 .800L10.800 5 6.400 9.200"></path></svg>
 <svg class="ico" style="left:171px;top:5px" width="16" height="14" viewBox="0 0 16 14" fill="none" stroke="#4f4f4f" stroke-width="1.200"><rect x=".7" y="2.600" width="9.600" height="8.400"></rect><path d="M4.600 5.400h10.600v8H4.600z" fill="#f3f3f3"></path><path d="M9.200 .400v4M7.600 2.800l1.600 1.800 1.600-1.800" stroke-width="1"></path></svg>
 <svg class="ico" style="left:193px;top:5px" width="15" height="14" viewBox="0 0 15 14" fill="none" stroke="#c2c2c2" stroke-width="1.200"><rect x=".7" y="1.600" width="9.600" height="8.400"></rect><path d="M4.600 4.800h9.600v8H4.600z" fill="#f3f3f3"></path></svg>
 <!-- right side -->
 <svg class="ico" style="left:976px;top:6px" width="13" height="13" viewBox="0 0 13 13" fill="none" stroke="#5a5a5a" stroke-width="1.100"><rect x=".6" y=".6" width="11.800" height="11.800" rx="1"></rect><path d="M3 3.600h7M3 6.500h7M3 9.400h7"></path></svg>
 <div class="abs" style="left:995px;top:3px;width:18px;height:19px;background:#e3e3e3"></div>
 <svg class="ico" style="left:997px;top:5px" width="14" height="15" viewBox="0 0 14 15" fill="none" stroke="#4a4a4a" stroke-width="1.100"><rect x="1.600" y=".600" width="10.800" height="9.400"></rect><path d="M3.600 3.200h6.800M3.600 5.400h6.800M3.600 7.600h6.800M1.600 12.400h10.800M.6 14.400h12.800"></path></svg>
 <svg class="ico" style="left:1018px;top:6px" width="14" height="13" viewBox="0 0 14 13" fill="none" stroke="#5a5a5a" stroke-width="1.100"><rect x=".6" y=".6" width="5.600" height="11.800"></rect><rect x="7.800" y=".6" width="5.600" height="11.800"></rect><path d="M2 3.400h2.800M2 6h2.800M2 8.600h2.800M9.200 3.400h2.800M9.200 6h2.800M9.200 8.600h2.800" stroke-width=".900"></path></svg>
 <svg class="ico" style="left:1040px;top:5px" width="15" height="15" viewBox="0 0 15 15" fill="none" stroke="#5a5a5a" stroke-width="1.100"><rect x=".6" y=".6" width="6" height="9"></rect><rect x="8.400" y=".6" width="6" height="9"></rect><path d="M2 3h3.200M2 5.400h3.200M9.800 3H13M9.800 5.400H13" stroke-width=".900"></path><path d="M.6 12h6M8.400 12h6M.6 14.200h6M8.400 14.200h6"></path></svg>
 <div class="abs" style="left:1060px;top:12px;width:6px;height:1px;background:#444"></div>
 <div class="abs" style="left:1068px;top:12px;width:96px;height:1px;background:#9a9a9a"></div>
 <div class="abs" style="left:1116px;top:8px;width:9px;height:9px;border-radius:50%;background:#fff;border:1px solid #6a6a6a"></div>
 <svg class="ico" style="left:1167px;top:8px" width="9" height="9" viewBox="0 0 9 9" stroke="#444" stroke-width="1.100"><path d="M4.500 .500v8M.500 4.500h8"></path></svg>
 <div class="abs" style="left:1177px;top:3px;width:67px;height:18px;background:#fff"></div>
 <svg class="ico" style="left:1235px;top:11px" width="5" height="3" viewBox="0 0 5 3"><path d="M0 0h5L2.500 3z" fill="#777"></path></svg>
 <svg class="ico" style="left:1249px;top:5px" width="14" height="14" viewBox="0 0 14 14" fill="none" stroke="#555" stroke-width="1.200"><path d="M.8 4V.800H4M10 .800h3.200V4M13.200 10v3.200H10M4 13.200H.8V10"></path><path d="M1.200 1.200l3.200 3.200M12.800 1.200L9.600 4.400M12.800 12.800L9.600 9.600M1.200 12.800l3.200-3.200" stroke-width="1"></path></svg>
</div>
<span class="t" style="left: 30px; top: 820px; font-size: 10.5px; color: rgb(34, 34, 34); display: inline-block; white-space: nowrap; transform-origin: 0px 50%; transform: scaleX(1.0654);">9 / 10</span>
<span class="t" style="left: 1180px; top: 820px; font-size: 10.5px; color: rgb(34, 34, 34); display: inline-block; white-space: nowrap; transform-origin: 0px 50%; transform: scaleX(0.9649);">121,27%</span>
<!--/STATUS-->
<div id="bottom" class="abs"></div>
</div>


</body></html>
